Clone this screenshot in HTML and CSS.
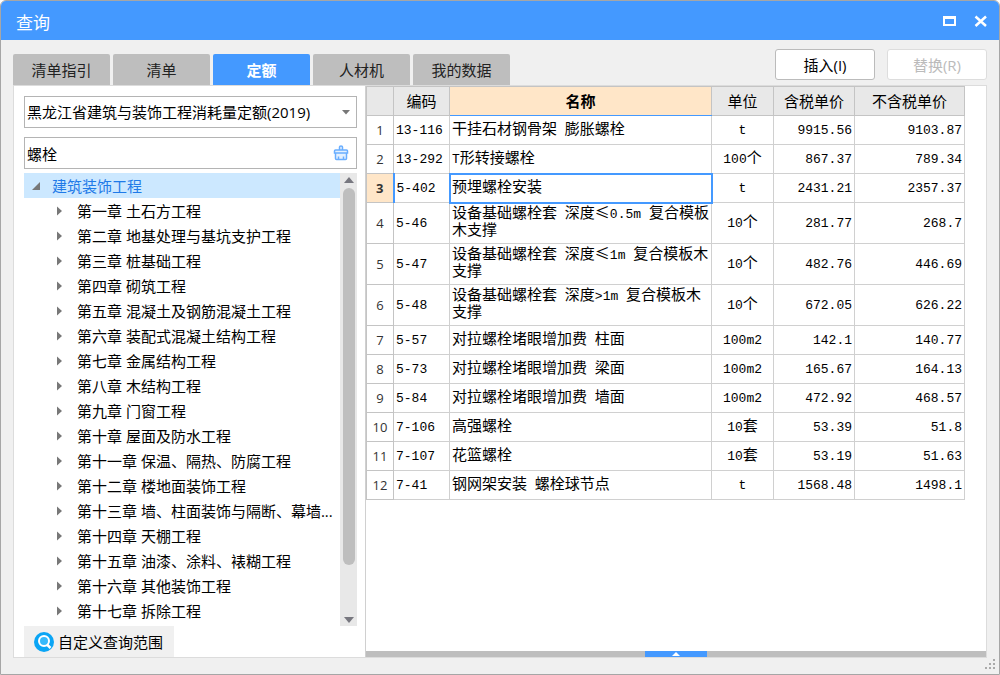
FILE: index.html
```
<!DOCTYPE html>
<html lang="zh-CN">
<head>
<meta charset="utf-8">
<title>查询</title>
<link rel="stylesheet" href="styles.css">
</head>
<body>
<div class="window">
  <header class="titlebar">
    <h1 class="title">查询</h1>
    <button class="win-btn" aria-label="最大化"><svg width="14" height="14" viewBox="0 0 14 14"><path d="M1 2H14V12H1ZM3 5V10H12V5Z" fill="#fff" fill-rule="evenodd"/></svg></button>
    <button class="win-btn" aria-label="关闭"><svg width="14" height="14" viewBox="0 0 14 14"><path d="M1.500 2.500L12 12M12 2.500L1.500 12" stroke="#fff" stroke-width="2.500"/></svg></button>
  </header>

  <div class="toolbar">
    <nav class="tabs">
      <button class="tab">清单指引</button>
      <button class="tab">清单</button>
      <button class="tab active">定额</button>
      <button class="tab">人材机</button>
      <button class="tab">我的数据</button>
    </nav>
    <div class="actions">
      <button class="action">插入(I)</button>
      <button class="action" disabled>替换(R)</button>
    </div>
  </div>

  <main class="panel">
    <aside class="side">
      <div class="field">
        <select class="control" aria-label="定额库"><option>黑龙江省建筑与装饰工程消耗量定额(2019)</option></select>
        <svg class="arrow" width="8" height="5" viewBox="0 0 8 5"><path d="M0 0H8L4 4.500Z" fill="#777"/></svg>
      </div>
      <div class="field search">
        <input class="control" type="text" aria-label="搜索" value="螺栓">
        <button class="clear" aria-label="清空"><svg width="16" height="16" viewBox="0 0 16 16"><path d="M6.500 5V2Q6.500 1 8 1T9.500 2V5M2.500 5H13.500Q14.500 5 14.500 6V8H1.500V6Q1.500 5 2.500 5ZM2.500 8V13.500Q2.500 14.500 3.500 14.500H12.500Q13.500 14.500 13.500 13.500V8M5.500 14V11.500M10.500 14V11.500" fill="#e4f1ff" stroke="#6aaeff" stroke-width="1.500"/></svg></button>
      </div>
      <div class="tree-box">
        <ul class="tree">
          <li><button class="node root"><svg width="9" height="9" viewBox="0 0 9 9"><path d="M8 1V9H0Z" fill="#777"/></svg>建筑装饰工程</button>
            <ul class="tree">
              <li><button class="node"><svg width="6" height="10" viewBox="0 0 6 10"><path d="M0 0.500L5 5L0 9.500Z" fill="#777"/></svg>第一章 土石方工程</button></li>
              <li><button class="node"><svg width="6" height="10" viewBox="0 0 6 10"><path d="M0 0.500L5 5L0 9.500Z" fill="#777"/></svg>第二章 地基处理与基坑支护工程</button></li>
              <li><button class="node"><svg width="6" height="10" viewBox="0 0 6 10"><path d="M0 0.500L5 5L0 9.500Z" fill="#777"/></svg>第三章 桩基础工程</button></li>
              <li><button class="node"><svg width="6" height="10" viewBox="0 0 6 10"><path d="M0 0.500L5 5L0 9.500Z" fill="#777"/></svg>第四章 砌筑工程</button></li>
              <li><button class="node"><svg width="6" height="10" viewBox="0 0 6 10"><path d="M0 0.500L5 5L0 9.500Z" fill="#777"/></svg>第五章 混凝土及钢筋混凝土工程</button></li>
              <li><button class="node"><svg width="6" height="10" viewBox="0 0 6 10"><path d="M0 0.500L5 5L0 9.500Z" fill="#777"/></svg>第六章 装配式混凝土结构工程</button></li>
              <li><button class="node"><svg width="6" height="10" viewBox="0 0 6 10"><path d="M0 0.500L5 5L0 9.500Z" fill="#777"/></svg>第七章 金属结构工程</button></li>
              <li><button class="node"><svg width="6" height="10" viewBox="0 0 6 10"><path d="M0 0.500L5 5L0 9.500Z" fill="#777"/></svg>第八章 木结构工程</button></li>
              <li><button class="node"><svg width="6" height="10" viewBox="0 0 6 10"><path d="M0 0.500L5 5L0 9.500Z" fill="#777"/></svg>第九章 门窗工程</button></li>
              <li><button class="node"><svg width="6" height="10" viewBox="0 0 6 10"><path d="M0 0.500L5 5L0 9.500Z" fill="#777"/></svg>第十章 屋面及防水工程</button></li>
              <li><button class="node"><svg width="6" height="10" viewBox="0 0 6 10"><path d="M0 0.500L5 5L0 9.500Z" fill="#777"/></svg>第十一章 保温、隔热、防腐工程</button></li>
              <li><button class="node"><svg width="6" height="10" viewBox="0 0 6 10"><path d="M0 0.500L5 5L0 9.500Z" fill="#777"/></svg>第十二章 楼地面装饰工程</button></li>
              <li><button class="node"><svg width="6" height="10" viewBox="0 0 6 10"><path d="M0 0.500L5 5L0 9.500Z" fill="#777"/></svg>第十三章 墙、柱面装饰与隔断、幕墙...</button></li>
              <li><button class="node"><svg width="6" height="10" viewBox="0 0 6 10"><path d="M0 0.500L5 5L0 9.500Z" fill="#777"/></svg>第十四章 天棚工程</button></li>
              <li><button class="node"><svg width="6" height="10" viewBox="0 0 6 10"><path d="M0 0.500L5 5L0 9.500Z" fill="#777"/></svg>第十五章 油漆、涂料、裱糊工程</button></li>
              <li><button class="node"><svg width="6" height="10" viewBox="0 0 6 10"><path d="M0 0.500L5 5L0 9.500Z" fill="#777"/></svg>第十六章 其他装饰工程</button></li>
              <li><button class="node"><svg width="6" height="10" viewBox="0 0 6 10"><path d="M0 0.500L5 5L0 9.500Z" fill="#777"/></svg>第十七章 拆除工程</button></li>
            </ul>
          </li>
        </ul>
        <div class="scrollbar">
          <svg width="10" height="6" viewBox="0 0 10 6"><path d="M0 6L5 0L10 6Z" fill="#77777f"/></svg>
          <div class="track"><div class="thumb"></div></div>
          <svg width="10" height="6" viewBox="0 0 10 6"><path d="M0 0H10L5 6Z" fill="#77777f"/></svg>
        </div>
      </div>
      <button class="range"><svg width="20" height="20" viewBox="0 0 20 20"><circle cx="10" cy="10" r="10" fill="#0aa5f5"/><circle cx="10" cy="9" r="5" fill="#35b9fb" stroke="#fff" stroke-width="2"/><path d="M13 12.500L16.500 16" stroke="#fff" stroke-width="2.500"/></svg>自定义查询范围</button>
    </aside>

    <section class="content">
      <div class="grid-area">
        <table class="grid">
          <colgroup><col class="c-no"><col class="c-code"><col class="c-name"><col class="c-unit"><col class="c-tax"><col class="c-net"></colgroup>
          <thead>
            <tr><th></th><th>编码</th><th class="current">名称</th><th>单位</th><th>含税单价</th><th>不含税单价</th></tr>
          </thead>
          <tbody>
            <tr><th>1</th><td class="mono">13-116</td><td>干挂石材钢骨架<span class="mono"> </span>膨胀螺栓</td><td class="mono unit">t</td><td class="mono num">9915.56</td><td class="mono num">9103.87</td></tr>
            <tr><th>2</th><td class="mono">13-292</td><td><span class="mono">T</span>形转接螺栓</td><td class="unit"><span class="mono">100</span>个</td><td class="mono num">867.37</td><td class="mono num">789.34</td></tr>
            <tr><th class="current">3</th><td class="mono">5-402</td><td class="selected">预埋螺栓安装</td><td class="mono unit">t</td><td class="mono num">2431.21</td><td class="mono num">2357.37</td></tr>
            <tr class="tall"><th>4</th><td class="mono">5-46</td><td>设备基础螺栓套<span class="mono"> </span>深度<span class="wide">≤</span><span class="mono">0.5m </span>复合模板木支撑</td><td class="unit"><span class="mono">10</span>个</td><td class="mono num">281.77</td><td class="mono num">268.7</td></tr>
            <tr class="tall"><th>5</th><td class="mono">5-47</td><td>设备基础螺栓套<span class="mono"> </span>深度<span class="wide">≤</span><span class="mono">1m </span>复合模板木支撑</td><td class="unit"><span class="mono">10</span>个</td><td class="mono num">482.76</td><td class="mono num">446.69</td></tr>
            <tr class="tall"><th>6</th><td class="mono">5-48</td><td>设备基础螺栓套<span class="mono"> </span>深度<span class="mono">&gt;1m </span>复合模板木支撑</td><td class="unit"><span class="mono">10</span>个</td><td class="mono num">672.05</td><td class="mono num">626.22</td></tr>
            <tr><th>7</th><td class="mono">5-57</td><td>对拉螺栓堵眼增加费<span class="mono"> </span>柱面</td><td class="mono unit">100m2</td><td class="mono num">142.1</td><td class="mono num">140.77</td></tr>
            <tr><th>8</th><td class="mono">5-73</td><td>对拉螺栓堵眼增加费<span class="mono"> </span>梁面</td><td class="mono unit">100m2</td><td class="mono num">165.67</td><td class="mono num">164.13</td></tr>
            <tr><th>9</th><td class="mono">5-84</td><td>对拉螺栓堵眼增加费<span class="mono"> </span>墙面</td><td class="mono unit">100m2</td><td class="mono num">472.92</td><td class="mono num">468.57</td></tr>
            <tr><th>10</th><td class="mono">7-106</td><td>高强螺栓</td><td class="unit"><span class="mono">10</span>套</td><td class="mono num">53.39</td><td class="mono num">51.8</td></tr>
            <tr><th>11</th><td class="mono">7-107</td><td>花篮螺栓</td><td class="unit"><span class="mono">10</span>套</td><td class="mono num">53.19</td><td class="mono num">51.63</td></tr>
            <tr><th>12</th><td class="mono">7-41</td><td>钢网架安装<span class="mono"> </span>螺栓球节点</td><td class="mono unit">t</td><td class="mono num">1568.48</td><td class="mono num">1498.1</td></tr>
          </tbody>
        </table>
      </div>
      <div class="splitter"><button class="expand" aria-label="展开"><svg width="8" height="4" viewBox="0 0 8 4"><path d="M0 4L4 0L8 4Z" fill="#fff"/></svg></button></div>
    </section>
  </main>
  <svg class="grip" width="11" height="11" viewBox="0 0 11 11"><path d="M8 0h2v2h-2zM4 4h2v2h-2zM8 4h2v2h-2zM0 8h2v2h-2zM4 8h2v2h-2zM8 8h2v2h-2z" fill="#aaa"/></svg>
</div>
</body>
</html>
```
FILE: styles.css
```
* { box-sizing: border-box; }
body {
  margin: 0;
  background: #fff;
  color: #000;
  font: 15px/20px "Open Sans", "Noto Sans CJK SC", sans-serif;
}
button, input, select { font: inherit; color: inherit; margin: 0; padding: 0; border: 0; background: none; }
svg { display: block; flex: none; }

.window {
  position: relative;
  display: flex;
  flex-direction: column;
  height: 100vh;
  border: 1px solid #a6a6a6;
  border-radius: 6px 6px 0 0;
  background: #f0f0f0;
  overflow: hidden;
}
.titlebar {
  display: flex;
  align-items: center;
  gap: 18px;
  height: 39px;
  padding: 0 11px 0 15px;
  background: #4499ff;
  color: #fff;
}
.title { flex: 1; margin: 0; padding-top: 4px; font-size: 17px; font-weight: 400; }

.toolbar { display: flex; justify-content: space-between; align-items: flex-end; height: 45px; padding: 0 12px; }
.tabs { display: flex; gap: 3px; }
.tab { width: 97px; height: 31px; border-radius: 2px 2px 0 0; background: #bebebe; color: #222; }
.tab.active { background: #4499ff; color: #fff; font-weight: 700; }
.actions { display: flex; gap: 12px; padding-bottom: 5px; }
.action { width: 100px; height: 31px; border: 1px solid #bbb; border-radius: 3px; background: #fff; }
.action:disabled { border-color: #ddd; color: #bbb; }

.panel {
  display: flex;
  flex: 1;
  min-height: 0;
  margin: 0 12px 16px;
  border: 1px solid #dcdcdc;
  background: #fff;
}
.side { display: flex; flex-direction: column; flex: none; width: 351px; padding: 10px 8px 0 10px; }
.field { position: relative; height: 32px; margin-bottom: 9px; border: 1px solid #b4b4b4; }
.search { margin-bottom: 4px; }
.control { display: block; width: 100%; height: 100%; padding: 0 2px; outline: 0; appearance: none; }
.arrow { position: absolute; right: 6px; top: 13px; pointer-events: none; }
.clear { position: absolute; right: 7px; top: 7px; }

.tree-box { display: flex; flex: 1; min-height: 0; }
.tree { flex: 1; min-width: 0; margin: 0; padding: 0; list-style: none; overflow: hidden; }
.node { display: flex; align-items: center; gap: 14px; width: 100%; height: 25px; padding-left: 33px; text-align: left; white-space: nowrap; }
.node.root { gap: 11px; padding-left: 8px; background: #cce8ff; color: #1f7ae8; }
.scrollbar { display: flex; flex-direction: column; align-items: center; gap: 5px; width: 17px; padding: 4px 0 3px; background: #e8e8e8; }
.track { flex: 1; width: 12px; }
.thumb { height: 89%; border-radius: 6px; background: #bebebe; }
.range { display: flex; align-items: center; gap: 4px; width: 150px; height: 31px; padding-left: 10px; background: #f0f0f0; }

.content { display: flex; flex: 1; flex-direction: column; min-width: 0; border-left: 1px solid #d0d0d0; }
.grid-area { flex: 1; min-height: 0; overflow: hidden; }
.grid { table-layout: fixed; width: 598px; border-collapse: collapse; line-height: 17px; }
.c-no { width: 27px; }
.c-code { width: 56px; }
.c-name { width: 262px; }
.c-unit { width: 62px; }
.c-tax { width: 81px; }
.c-net { width: 110px; }
.grid tr { height: 29px; }
.grid .tall { height: 41px; }
.grid th, .grid td { padding: 0 2px; border: 1px solid #d0d0d0; font-weight: 400; text-align: left; }
.grid td { font-family: "Liberation Mono", "Noto Sans CJK SC", monospace; }
.grid th { border-color: #c4c4c4; text-align: center; }
.grid thead th { background: #e8e8e8; }
.grid tbody th { color: #333; font-size: 13px; }
.grid .current { background: #ffe6c8; font-weight: 700; }
.grid thead .current { border-bottom-color: #4499ff; }
.grid tbody .current { border-right: 2px solid #4499ff; }
.grid .selected { outline: 2px solid #4499ff; outline-offset: -1px; }
.grid .mono { font-family: "Liberation Mono", monospace; font-size: 13px; }
.grid .wide { font-family: "Noto Sans CJK SC", sans-serif; line-height: 0; }
.grid .unit { text-align: center; }
.grid .num { text-align: right; }

.splitter { display: flex; justify-content: center; height: 6px; background: #bebebe; }
.expand { display: flex; align-items: center; justify-content: center; width: 62px; height: 6px; background: #4499ff; }
.grip { position: absolute; right: 3px; bottom: 4px; }
```
